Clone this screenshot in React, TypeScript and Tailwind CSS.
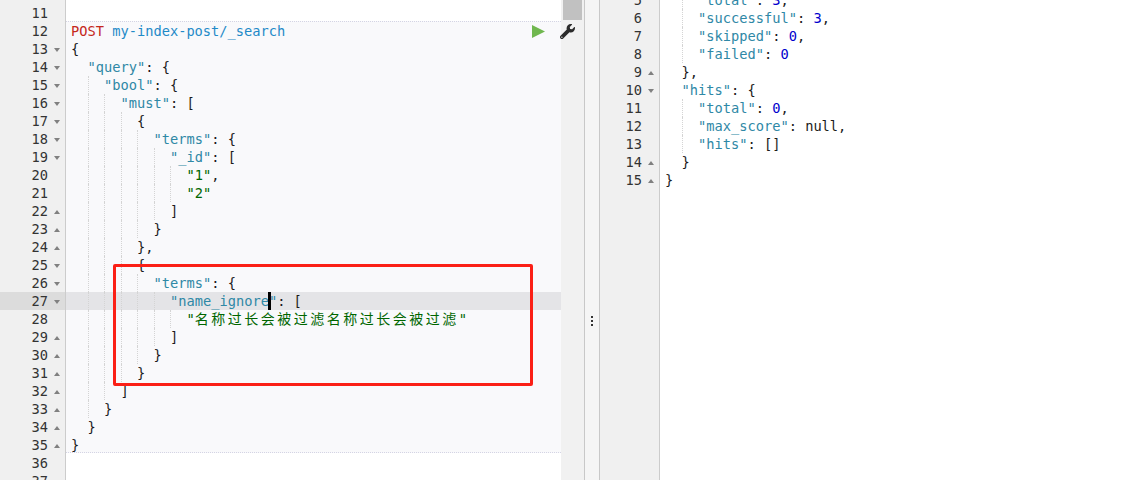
import { FaWrench } from "react-icons/fa";

type Kind = "method" | "url" | "key" | "str" | "num" | "plain" | "cjk" | "caret";
type Tok = [Kind, string];
type Fold = "down" | "up" | undefined;
type Line = { n: number; indent?: number; fold?: Fold; toks?: Tok[]; active?: boolean };

const kindClass: Record<Kind, string> = {
  method: "text-[#c5281c]",
  url: "text-[#1f8ac8]",
  key: "text-[#2f88a6]",
  str: "text-[#006600]",
  num: "text-[#0000cd]",
  plain: "text-[#1c1c1c]",
  cjk: "text-[#006600] text-[14px] tracking-[2.5px]",
  caret: "inline-block w-[3px] h-[18px] -ml-[1px] -mr-[2px] bg-black align-top",
};

const key = (name: string, open: string): Tok[] => [
  ["key", `"${name}"`],
  ["plain", `: ${open}`],
];
const num = (name: string, value: string, tail = ","): Tok[] => [
  ["key", `"${name}"`],
  ["plain", ": "],
  ["num", value],
  ["plain", tail],
];

const leftLines: Line[] = [
  { n: 12, toks: [["method", "POST"], ["plain", " "], ["url", "my-index-post/_search"]] },
  { n: 13, fold: "down", toks: [["plain", "{"]] },
  { n: 14, indent: 1, fold: "down", toks: key("query", "{") },
  { n: 15, indent: 2, fold: "down", toks: key("bool", "{") },
  { n: 16, indent: 3, fold: "down", toks: key("must", "[") },
  { n: 17, indent: 4, fold: "down", toks: [["plain", "{"]] },
  { n: 18, indent: 5, fold: "down", toks: key("terms", "{") },
  { n: 19, indent: 6, fold: "down", toks: key("_id", "[") },
  { n: 20, indent: 7, toks: [["str", '"1"'], ["plain", ","]] },
  { n: 21, indent: 7, toks: [["str", '"2"']] },
  { n: 22, indent: 6, fold: "up", toks: [["plain", "]"]] },
  { n: 23, indent: 5, fold: "up", toks: [["plain", "}"]] },
  { n: 24, indent: 4, fold: "up", toks: [["plain", "},"]] },
  { n: 25, indent: 4, fold: "down", toks: [["plain", "{"]] },
  { n: 26, indent: 5, fold: "down", toks: key("terms", "{") },
  {
    n: 27,
    indent: 6,
    fold: "down",
    active: true,
    toks: [["key", '"name_ignore'], ["caret", ""], ["key", '"'], ["plain", ": ["]],
  },
  { n: 28, indent: 7, toks: [["str", '"'], ["cjk", "名称过长会被过滤名称过长会被过滤"], ["str", '"']] },
  { n: 29, indent: 6, fold: "up", toks: [["plain", "]"]] },
  { n: 30, indent: 5, fold: "up", toks: [["plain", "}"]] },
  { n: 31, indent: 4, fold: "up", toks: [["plain", "}"]] },
  { n: 32, indent: 3, fold: "up", toks: [["plain", "]"]] },
  { n: 33, indent: 2, fold: "up", toks: [["plain", "}"]] },
  { n: 34, indent: 1, fold: "up", toks: [["plain", "}"]] },
  { n: 35, fold: "up", toks: [["plain", "}"]] },
];

const rightLines: Line[] = [
  { n: 5, indent: 2, toks: num("total", "3") },
  { n: 6, indent: 2, toks: num("successful", "3") },
  { n: 7, indent: 2, toks: num("skipped", "0") },
  { n: 8, indent: 2, toks: num("failed", "0", "") },
  { n: 9, indent: 1, fold: "up", toks: [["plain", "},"]] },
  { n: 10, indent: 1, fold: "down", toks: key("hits", "{") },
  { n: 11, indent: 2, toks: num("total", "0") },
  { n: 12, indent: 2, toks: key("max_score", "null,") },
  { n: 13, indent: 2, toks: [["key", '"hits"'], ["plain", ": []"]] },
  { n: 14, indent: 1, fold: "up", toks: [["plain", "}"]] },
  { n: 15, fold: "up", toks: [["plain", "}"]] },
];

function GutterRow({ line }: { line: Line }) {
  return (
    <div
      className={`flex items-center justify-end h-[18px] pr-[5px] text-[#333333] ${
        line.active ? "bg-[#dcdcdc]" : ""
      }`}
    >
      <span>{line.n}</span>
      <span className="ml-[6px] mt-[2px] w-[6px] flex justify-center">
        {line.fold && (
          <svg width="6" height="4" viewBox="0 0 6 4">
            <polygon points={line.fold === "down" ? "0,0 6,0 3,4" : "0,4 6,4 3,0"} fill="#808080" />
          </svg>
        )}
      </span>
    </div>
  );
}

function CodeRow({ line }: { line: Line }) {
  const indent = line.indent ?? 0;
  return (
    <div className={`flex h-[18px] pl-[5px] whitespace-pre ${line.active ? "bg-[#e4e4e7]" : ""}`}>
      {indent > 0 && <span className="w-[16.5px] shrink-0" />}
      {Array.from({ length: Math.max(indent - 1, 0) }).map((_, i) => (
        <span key={i} className="w-[16.5px] shrink-0 border-l border-dotted border-[#d4d4d4]" />
      ))}
      <span>
        {line.toks?.map(([kind, text], i) => (
          <span key={i} className={kindClass[kind]}>
            {text}
          </span>
        ))}
      </span>
    </div>
  );
}

export default function App() {
  return (
    <div className="relative flex h-[480px] w-[1144px] overflow-hidden bg-white font-['DejaVu_Sans_Mono','Noto_Sans_CJK_SC',monospace] text-[13.7px] leading-[18px]">
      {/* left gutter */}
      <div className="w-[66px] shrink-0 -mt-[14px] border-r border-[#cccccc] bg-[#f0f0f0]">
        {[10, 11].map((n) => (
          <GutterRow key={n} line={{ n }} />
        ))}
        {leftLines.map((line) => (
          <GutterRow key={line.n} line={line} />
        ))}
        {[36, 37].map((n) => (
          <GutterRow key={n} line={{ n }} />
        ))}
      </div>

      {/* request editor */}
      <div className="relative w-[495px] shrink-0">
        <div className="mt-[21px] h-[432px] border-y border-dotted border-[#d4d4e4] bg-[#f9f9fb]">
          {leftLines.map((line) => (
            <CodeRow key={line.n} line={line} />
          ))}
        </div>
        <div className="absolute left-[466px] top-[25px] flex">
          <svg width="13" height="13" viewBox="0 0 13 13">
            <polygon points="0,0 13,6.5 0,13" fill="#70b74f" />
          </svg>
        </div>
      </div>

      {/* scrollbar strip */}
      <div className="relative w-[24px] shrink-0 border-r border-[#c8c8c8] bg-[#f1f1f1] pl-[2px]">
        <div className="h-[20px] w-[19px] bg-[#c1c1c1]" />
        <FaWrench className="absolute -left-[1px] top-[24px] text-[15px] text-[#2b2b2b]" />
      </div>

      {/* resizer */}
      <div className="flex w-[15px] shrink-0 flex-col items-center justify-center gap-[2px] border-r border-[#c8c8c8] bg-[#f5f5f5] pt-[162px]">
        <span className="h-[2px] w-[2px] bg-[#333333]" />
        <span className="h-[2px] w-[2px] bg-[#333333]" />
        <span className="h-[2px] w-[2px] bg-[#333333]" />
      </div>

      {/* response gutter */}
      <div className="w-[60px] shrink-0 -mt-[9px] border-r border-[#cccccc] bg-[#f0f0f0]">
        {rightLines.map((line) => (
          <GutterRow key={line.n} line={line} />
        ))}
      </div>

      {/* response */}
      <div className="-mt-[9px] flex-1">
        {rightLines.map((line) => (
          <CodeRow key={line.n} line={line} />
        ))}
      </div>

      {/* red annotation */}
      <div className="absolute left-[113px] top-[264px] h-[122px] w-[420px] rounded-[2px] border-[3px] border-[#fb1f16]" />
    </div>
  );
}
